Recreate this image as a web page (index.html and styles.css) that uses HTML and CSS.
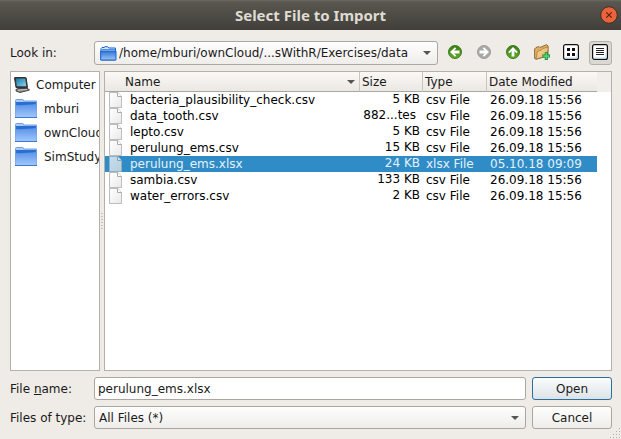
FILE: index.html
```html
<!DOCTYPE html>
<html lang="en">
<head>
<meta charset="utf-8">
<title>Select File to Import</title>
<link rel="stylesheet" href="styles.css">
</head>
<body>
<svg class="defs" aria-hidden="true">
  <defs>
    <linearGradient id="blue" x1="0" y1="0" x2="0" y2="1"><stop offset="0" stop-color="#5b93e8"/><stop offset="1" stop-color="#a3c8fb"/></linearGradient>
    <linearGradient id="deep" x1="0" y1="0" x2="0" y2="1"><stop offset="0" stop-color="#2f74d4"/><stop offset="1" stop-color="#9cc2f6"/></linearGradient>
    <linearGradient id="green" x1="0" y1="0" x2="0" y2="1"><stop offset="0" stop-color="#3a7a14"/><stop offset="1" stop-color="#5fae2c"/></linearGradient>
    <linearGradient id="sheet" x1="0" y1="0" x2="1" y2="1"><stop offset="0" stop-color="#ffffff"/><stop offset="1" stop-color="#e9e9e9"/></linearGradient>
    <linearGradient id="screen" x1="0" y1="0" x2="1" y2="1"><stop offset="0" stop-color="#1878a8"/><stop offset="1" stop-color="#8cd4f0"/></linearGradient>
    <linearGradient id="tan" x1="0" y1="0" x2="1" y2="1"><stop offset="0" stop-color="#fbe3ab"/><stop offset="1" stop-color="#dfa950"/></linearGradient>
    <symbol id="folder" viewBox="0 0 24 20">
      <path d="M1.500 3V1.500Q1.500.5 2.500.5H8.500Q9.500.5 9.500 1.500V2H22.500V18H1.500Z" fill="#a9c9f6" stroke="#6f9fe4"/>
      <path d="M2 3H22V7H2Z" fill="#2a6fd0"/>
      <path d="M1.500 6Q12 6.500 22.500 5V18.500H1.500Z" fill="url(#blue)"/>
      <path d="M1 18.500H23" stroke="#3b79d4"/>
    </symbol>
    <symbol id="file" viewBox="0 0 15 16">
      <path d="M1.500.5H10L13.500 4.500V15.500H1.500Z" fill="url(#sheet)" stroke="#bcbcbc"/>
      <path d="M9.500.5V4.500H13.500" fill="#fff" stroke="#aaa"/>
    </symbol>
    <symbol id="arrow" viewBox="0 0 14 14">
      <path d="M2 7L7 2.200L8.300 3.500L6.200 5.600H11.500V8.400H6.200L8.300 10.500L7 11.800Z" fill="#fff"/>
    </symbol>
  </defs>
</svg>
<div class="dialog">
  <header class="titlebar">
    <h1>Select File to Import</h1>
    <button class="close" type="button" aria-label="Close"><svg viewBox="0 0 18 18"><circle cx="9" cy="9" r="8.300" fill="#ed6238" stroke="#33322e"/><path d="M6.300 6.300L11.700 11.700M11.700 6.300L6.300 11.700" stroke="#542413" stroke-width="1.200"/></svg></button>
  </header>
  <form class="content">
    <div class="location">
      <label class="caption" for="dir">Look in:</label>
      <div class="select path">
        <svg class="pathicon" viewBox="0 0 17 15"><path d="M1 4.500V2.500L2 1.500H4L5 .7H7.500L9 2H15.500V14H1Z" fill="#d5e5fb" stroke="#1764cc"/><path d="M.7 5H16V14H.7Z" fill="url(#deep)" stroke="#1764cc"/><path d="M2 3.500H15" stroke="#4b90e8"/></svg>
        <select id="dir"><option>/home/mburi/ownCloud/...sWithR/Exercises/data</option></select>
      </div>
      <div class="tools">
        <button type="button" aria-label="Back"><svg viewBox="0 0 16 16"><circle cx="8" cy="8" r="6.500" fill="url(#green)" stroke="#3f7c20"/><use href="#arrow" x="1" y="1" width="14" height="14"/></svg></button>
        <button type="button" aria-label="Forward" disabled><svg viewBox="0 0 16 16"><circle cx="8" cy="8" r="6.500" fill="#a9a8a6" stroke="#a09f9d"/><g transform="rotate(180 8 8)"><use href="#arrow" x="1" y="1" width="14" height="14"/></g></svg></button>
        <button type="button" aria-label="Parent Directory"><svg viewBox="0 0 16 16"><circle cx="8" cy="8" r="6.500" fill="url(#green)" stroke="#3f7c20"/><g transform="rotate(90 8 8)"><use href="#arrow" x="1" y="1" width="14" height="14"/></g></svg></button>
        <button type="button" aria-label="Create New Folder"><svg viewBox="0 0 16 16"><path d="M.6 5L2 3.500L5 2.500L6 3.500L12.500.6L14 2V12L2 15.300L.6 14.500Z" fill="#e0ad5c" stroke="#75572a" stroke-width=".8"/><path d="M2 15L3.500 7.500L7.500 6L9 4.500L14.300 3L13 12Z" fill="url(#tan)" stroke="#9a763e" stroke-width=".7"/><path d="M12.300 8.300V16M8.500 12.100H16" stroke="#187c3c" stroke-width="3"/><path d="M12.300 9V15.300M9.200 12.100H15.400" stroke="#4fd66f" stroke-width="1.600"/></svg></button>
        <button type="button" aria-label="List View"><svg viewBox="0 0 16 16"><rect x=".6" y=".6" width="14.800" height="14.800" rx="2" fill="#fff" stroke="#111" stroke-width="1.200"/><path d="M2 14H14V10" fill="none" stroke="#b9d5f5"/><path d="M4 4h3v3H4zM9 4h3v3H9zM4 9h3v3H4zM9 9h3v3H9z" fill="#111"/></svg></button>
        <button type="button" class="active" aria-label="Detail View"><svg viewBox="0 0 16 16"><rect x=".6" y=".6" width="14.800" height="14.800" rx="2" fill="#fff" stroke="#111" stroke-width="1.200"/><path d="M2 14H14V10" fill="none" stroke="#b9d5f5"/><path d="M4 4.500H12M4 6.500H12M4 8.500H12M4 10.500H12" stroke="#222"/></svg></button>
      </div>
    </div>
    <div class="panes">
      <ul class="places">
        <li><svg class="computer" viewBox="0 0 16 16"><path d="M.5 1Q.5.5 1 .5H11.500Q12 .5 12.200 1L13.500 10.500H2Z" fill="#333" stroke="#333"/><path d="M1.800 1.600H11.200L12.300 9.300H2.800Z" fill="url(#screen)"/><path d="M4 11.500H14L15.500 13L6 15.500L2 14V12.500Z" fill="#888" stroke="#444"/><path d="M4 13.300L13 12.300" stroke="#ccc"/></svg><span>Computer</span></li>
        <li><svg class="folder"><use href="#folder"/></svg><span>mburi</span></li>
        <li><svg class="folder"><use href="#folder"/></svg><span>ownCloud</span></li>
        <li><svg class="folder"><use href="#folder"/></svg><span>SimStudy</span></li>
      </ul>
      <div class="splitter"></div>
      <div class="files">
        <table>
          <colgroup><col><col class="c-size"><col class="c-type"><col class="c-date"></colgroup>
          <thead><tr><th scope="col" class="sorted">Name</th><th scope="col">Size</th><th scope="col">Type</th><th scope="col">Date Modified</th></tr></thead>
          <tbody>
            <tr><td><svg><use href="#file"/></svg><span>bacteria_plausibility_check.csv</span></td><td>5 KB</td><td>csv File</td><td>26.09.18 15:56</td></tr>
            <tr><td><svg><use href="#file"/></svg><span>data_tooth.csv</span></td><td class="elided">882...tes</td><td>csv File</td><td>26.09.18 15:56</td></tr>
            <tr><td><svg><use href="#file"/></svg><span>lepto.csv</span></td><td>5 KB</td><td>csv File</td><td>26.09.18 15:56</td></tr>
            <tr><td><svg><use href="#file"/></svg><span>perulung_ems.csv</span></td><td>15 KB</td><td>csv File</td><td>26.09.18 15:56</td></tr>
            <tr class="selected"><td><svg><use href="#file"/></svg><span>perulung_ems.xlsx</span></td><td>24 KB</td><td>xlsx File</td><td>05.10.18 09:09</td></tr>
            <tr><td><svg><use href="#file"/></svg><span>sambia.csv</span></td><td>133 KB</td><td>csv File</td><td>26.09.18 15:56</td></tr>
            <tr><td><svg><use href="#file"/></svg><span>water_errors.csv</span></td><td>2 KB</td><td>csv File</td><td>26.09.18 15:56</td></tr>
          </tbody>
        </table>
      </div>
    </div>
    <div class="fields">
      <label class="caption" for="name">File <u>n</u>ame:</label>
      <input id="name" type="text" value="perulung_ems.xlsx">
      <button type="submit" class="push default">Open</button>
      <label class="caption" for="type">Files of type:</label>
      <div class="select"><select id="type"><option>All Files (*)</option></select></div>
      <button type="button" class="push">Cancel</button>
    </div>
  </form>
  <svg class="grip" viewBox="0 0 12 12" aria-hidden="true"><path d="M10 1h1v1h-1zM7 4h1v1H7zM10 4h1v1h-1zM4 7h1v1H4zM7 7h1v1H7zM10 7h1v1h-1zM1 10h1v1H1zM4 10h1v1H4zM7 10h1v1H7zM10 10h1v1h-1z" fill="#b3b0ac"/></svg>
</div>
</body>
</html>
```
FILE: styles.css
```css
* { box-sizing: border-box; }
body {
  margin: 0;
  background: #efebe7;
  color: #1a1a1a;
  font: 12px/16px "DejaVu Sans", sans-serif;
}
.defs { position: absolute; width: 0; height: 0; }
button, input, select { font: inherit; color: inherit; margin: 0; }
svg { display: block; flex: none; }

.dialog {
  position: relative;
  display: flex;
  flex-direction: column;
  min-height: 100vh;
}
.titlebar {
  display: grid;
  grid-template-columns: 24px 1fr 24px;
  align-items: center;
  height: 30px;
  background: linear-gradient(#6b6960 0, #59574f 2px, #403f3a 100%);
  color: #dfdbd2;
}
.titlebar h1 {
  grid-column: 2;
  margin: 0;
  text-align: center;
  font: bold 15px/20px "Noto Sans", sans-serif;
}
.close { border: 0; padding: 0; background: none; width: 18px; height: 18px; justify-self: center; }
.close svg { width: 18px; height: 18px; }

.content {
  flex: 1;
  display: flex;
  flex-direction: column;
  gap: 6px;
  padding: 11px 9px 10px 10px;
}
.caption { width: 84px; flex: none; }
.location { display: flex; align-items: center; height: 24px; }
.select {
  position: relative;
  display: flex;
  align-items: center;
  flex: 1;
  min-width: 0;
  border: 1px solid #aaa7a3;
  border-radius: 3px;
  background: linear-gradient(#fefefe, #efedea);
}
.select::after {
  content: "";
  position: absolute;
  right: 6px;
  top: 50%;
  margin-top: -2px;
  border: 4px solid transparent;
  border-top-color: #555;
  border-bottom: 0;
  pointer-events: none;
}
.select select {
  appearance: none;
  flex: 1;
  min-width: 0;
  height: 22px;
  border: 0;
  padding: 0 16px 0 4px;
  background: none;
}
.path { height: 24px; }
.path select { padding-left: 2px; }
.pathicon { width: 17px; height: 15px; margin-left: 5px; }
.tools { display: flex; gap: 6px; margin-left: 5px; }
.tools button {
  display: grid;
  place-items: center;
  width: 23px;
  height: 24px;
  padding: 0 1px 2px 0;
  border: 1px solid transparent;
  border-radius: 3px;
  background: none;
}
.tools { margin-left: 6px; }
.tools svg { width: 16px; height: 16px; }
.tools .active { border-color: #b5b2ae; background: #dbd8d4; }

.panes { flex: 1; display: flex; min-height: 0; }
.places {
  width: 90px;
  flex: none;
  margin: 0;
  padding: 1px 0 0 3px;
  border: 1px solid #b4b1ad;
  background: #fff;
  list-style: none;
  overflow: hidden;
}
.places li { display: flex; align-items: center; gap: 6px; height: 24px; white-space: nowrap; }
.folder { width: 24px; height: 20px; }
.computer { width: 16px; height: 16px; }
.splitter {
  width: 4px;
  display: grid;
  place-items: center;
}
.splitter::before {
  content: "";
  width: 2px;
  height: 16px;
  background: repeating-linear-gradient(#c5c2be 0 1px, transparent 1px 3px);
}
.files { flex: 1; min-width: 0; padding-right: 14px; border: 1px solid #b4b1ad; background: #fff linear-gradient(#f1eeeb, #f1eeeb) no-repeat 0 0 / 100% 20px; }
table { width: 100%; table-layout: fixed; border-collapse: separate; border-spacing: 0; color: #000; }
.c-size { width: 63px; }
.c-type { width: 64px; }
.c-date { width: 110px; }
th {
  height: 20px;
  padding: 0 0 0 2px;
  border-right: 1px solid #c9c6c2;
  border-bottom: 1px solid #aaa7a3;
  background: linear-gradient(#fbf8f5, #ebe8e4);
  color: #1a1a1a;
  font-weight: normal;
  text-align: left;
}
th:last-child { border-right: 0; }
.sorted { position: relative; padding-left: 20px; }
.sorted::after {
  content: "";
  position: absolute;
  right: 4px;
  top: 8px;
  border: 4px solid transparent;
  border-top-color: #555;
  border-bottom: 0;
}
td { height: 16px; padding: 1px 0 0 3px; line-height: 15px; white-space: nowrap; }
td:first-child { display: flex; gap: 7px; padding-top: 0; line-height: 17px; height: 16px; }
td svg { width: 15px; height: 16px; }
td:nth-child(2) { padding: 0 3px 1px 0; text-align: right; }
td:nth-child(2).elided { padding-right: 7px; }
.selected td { background: #308cc6; color: #e6f1f9; }
.selected svg { opacity: .72; }

.fields {
  display: grid;
  grid-template-columns: 84px 1fr 80px;
  grid-auto-rows: 23px;
  row-gap: 6px;
  align-items: center;
}
.fields input, .fields .select, .push { height: 23px; }
.fields input, .fields .select { margin-right: 6px; }
.fields input {
  min-width: 0;
  padding: 0 3px;
  border: 1px solid #aaa7a3;
  border-radius: 3px;
  background: #fff;
}
.fields .select select { height: 21px; }
.push {
  padding: 0;
  border: 1px solid #aaa7a3;
  border-radius: 3px;
  background: linear-gradient(#fefefe, #efedea);
}
.default { border-color: #2b6f9c; background: linear-gradient(#fbfcfc, #dce3e7); }
.grip { position: absolute; right: 0; bottom: 0; width: 12px; height: 12px; }
```
